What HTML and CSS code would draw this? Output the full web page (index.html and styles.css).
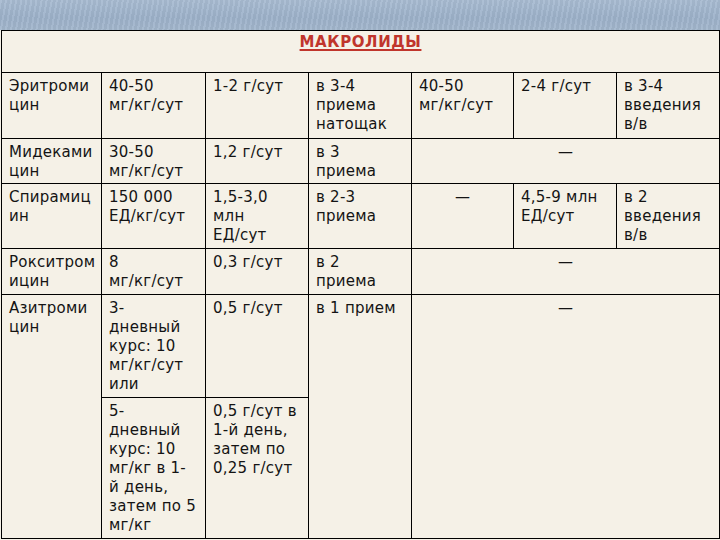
FILE: index.html
```html
<!DOCTYPE html>
<html lang="ru">
<head>
<meta charset="utf-8">
<title>Макролиды</title>
<link rel="stylesheet" href="styles.css">
</head>
<body>
<div class="band"></div>
<table class="grid">
  <colgroup>
    <col class="c1"><col class="c2"><col class="c3"><col class="c4"><col class="c5"><col class="c6"><col class="c7">
  </colgroup>
  <tr class="rh">
    <td colspan="7" class="title"><span>МАКРОЛИДЫ</span></td>
  </tr>
  <tr class="r1">
    <td>Эритроми<br>цин</td>
    <td>40-50<br>мг/кг/сут</td>
    <td>1-2 г/сут</td>
    <td>в 3-4<br>приема<br>натощак</td>
    <td>40-50<br>мг/кг/сут</td>
    <td>2-4 г/сут</td>
    <td>в 3-4<br>введения<br>в/в</td>
  </tr>
  <tr class="r2">
    <td>Мидеками<br>цин</td>
    <td>30-50<br>мг/кг/сут</td>
    <td>1,2 г/сут</td>
    <td>в 3<br>приема</td>
    <td colspan="3" class="dash">—</td>
  </tr>
  <tr class="r3">
    <td>Спирамиц<br>ин</td>
    <td>150 000<br>ЕД/кг/сут</td>
    <td>1,5-3,0<br>млн<br>ЕД/сут</td>
    <td>в 2-3<br>приема</td>
    <td class="dash">—</td>
    <td>4,5-9 млн<br>ЕД/сут</td>
    <td>в 2<br>введения<br>в/в</td>
  </tr>
  <tr class="r4">
    <td>Рокситром<br>ицин</td>
    <td>8<br>мг/кг/сут</td>
    <td>0,3 г/сут</td>
    <td>в 2<br>приема</td>
    <td colspan="3" class="dash">—</td>
  </tr>
  <tr class="r5">
    <td rowspan="2">Азитроми<br>цин</td>
    <td>3-<br>дневный<br>курс: 10<br>мг/кг/сут<br>или</td>
    <td>0,5 г/сут</td>
    <td rowspan="2">в 1 прием</td>
    <td rowspan="2" colspan="3" class="dash">—</td>
  </tr>
  <tr class="r6">
    <td>5-<br>дневный<br>курс: 10<br>мг/кг в 1-<br>й день,<br>затем по 5<br>мг/кг</td>
    <td>0,5 г/сут в<br>1-й день,<br>затем по<br>0,25 г/сут</td>
  </tr>
</table>
</body>
</html>
```
FILE: styles.css
```css
html, body {
  margin: 0;
  padding: 0;
  background: #f5f1e7;
}
.band {
  height: 30px;
  background:
    repeating-linear-gradient(100deg, rgba(255,255,255,0.06) 0 2px, rgba(0,0,0,0.04) 2px 5px),
    linear-gradient(180deg, #a9bcd2 0%, #9db2ca 60%, #a3b7cd 100%);
}
.grid {
  margin-left: 1px;
  width: 718px;
  table-layout: fixed;
  border-collapse: collapse;
  background: #f5f1e7;
  font-family: "DejaVu Sans", Verdana, sans-serif;
  font-size: 15px;
  letter-spacing: 0.25px;
  line-height: 19px;
  color: #141414;
}
.c1 { width: 100px; }
.c2 { width: 104px; }
.c3 { width: 103px; }
.c4 { width: 103px; }
.c5 { width: 102px; }
.c6 { width: 103px; }
.c7 { width: 103px; }
.grid td {
  border: 1px solid #000;
  vertical-align: top;
  padding: 4px 0 0 7px;
  white-space: nowrap;
  overflow: hidden;
}
.grid td.title {
  text-align: center;
  padding-top: 2px;
  padding-left: 0;
  font-weight: bold;
  font-size: 15px;
  letter-spacing: 0.6px;
  color: #c0352c;
}
.title span {
  text-decoration: underline;
  text-decoration-thickness: 2px;
  text-underline-offset: 2px;
}
.grid td.dash {
  text-align: center;
  padding-left: 0;
  padding-right: 0;
}
.rh { height: 42px; }
.r1 { height: 66px; }
.r2 { height: 45px; }
.r3 { height: 65px; }
.r4 { height: 46px; }
.r5 { height: 103px; }
.r6 { height: 141px; }
```
